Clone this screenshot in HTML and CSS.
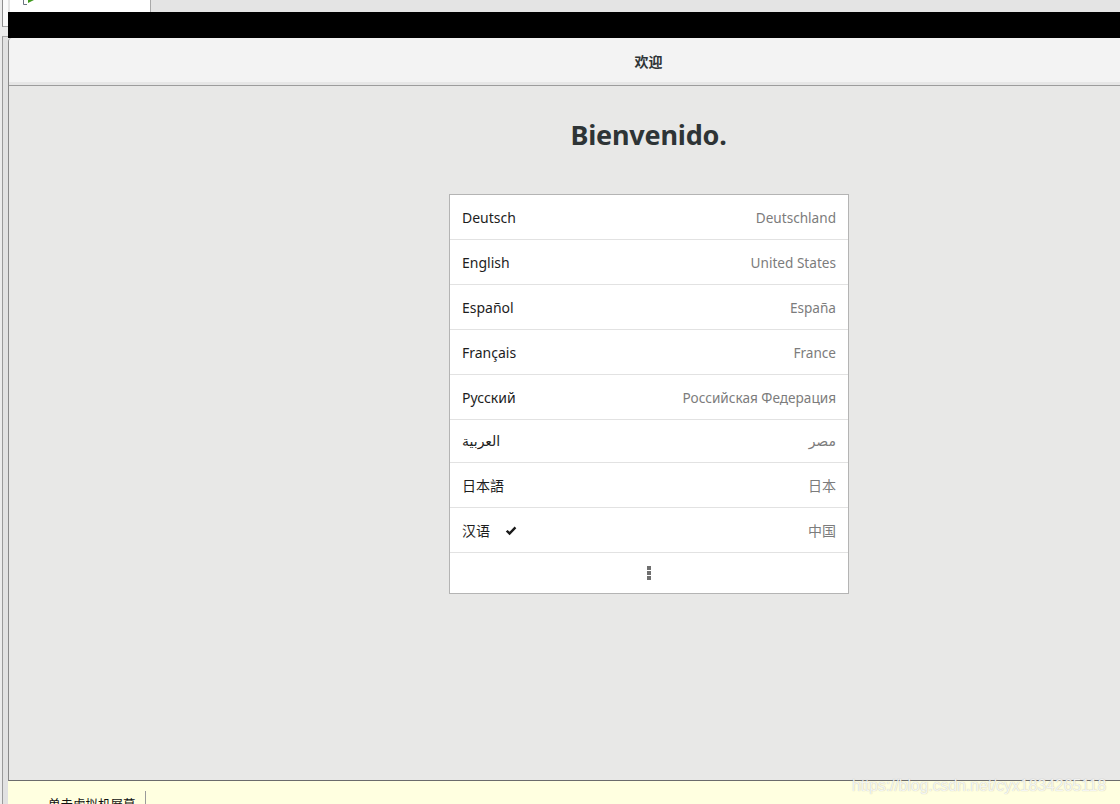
FILE: index.html
```html
<!doctype html>
<html lang="zh-CN">
  <head>
    <meta charset="UTF-8" />
    <meta name="viewport" content="width=device-width, initial-scale=1.0" />
    <title>欢迎</title>
    <link rel="stylesheet" href="styles.css">
  </head>
  <body>
    <div class="side">
      <div class="side-box"></div>
      <div class="side-rest"></div>
    </div>

    <div class="main">
      <div class="tabs">
        <div class="tab">
          <svg class="tab-icon" width="14" height="8" viewBox="0 0 14 8">
            <path d="M1.5 -4 V4.5 H5" fill="none" stroke="#6a7480" stroke-width="1" />
            <path d="M6 -3 L12 0 L6 3 Z" fill="#3f9a1f" />
          </svg>
        </div>
      </div>
      <div class="black-band"></div>

      <div class="window">
        <div class="header">欢迎</div>
        <div class="content">
          <h1 class="welcome">Bienvenido.</h1>
          <div class="lang-list">
            <div class="lang-row"><span class="lang">Deutsch</span><span class="region">Deutschland</span></div>
            <div class="lang-row"><span class="lang">English</span><span class="region">United States</span></div>
            <div class="lang-row"><span class="lang">Español</span><span class="region">España</span></div>
            <div class="lang-row"><span class="lang">Français</span><span class="region">France</span></div>
            <div class="lang-row"><span class="lang">Русский</span><span class="region">Российская Федерация</span></div>
            <div class="lang-row short"><span class="lang arabic">العربية</span><span class="region arabic">مصر</span></div>
            <div class="lang-row"><span class="lang cjk">日本語</span><span class="region cjk">日本</span></div>
            <div class="lang-row">
              <span class="lang cjk">汉语
                <svg class="check" width="12" height="10" viewBox="0 0 12 10">
                  <path d="M0.8 5.6 L2.6 3.9 L4.6 5.8 L9.6 0.6 L11.3 2.2 L4.6 9.2 Z" fill="#1a1a1a" />
                </svg>
              </span>
              <span class="region cjk">中国</span>
            </div>
            <div class="more-row">
              <span class="dot"></span><span class="dot"></span><span class="dot"></span>
            </div>
          </div>
        </div>
      </div>

      <div class="status">
        <span class="status-text">单击虚拟机屏幕</span>
        <span class="status-sep"></span>
        <span class="watermark">https://blog.csdn.net/cyx1834265118</span>
      </div>
    </div>
  </body>
</html>
```

FILE: styles.css
```css
html, body {
  margin: 0;
  padding: 0;
}
body {
  width: 1120px;
  height: 804px;
  overflow: hidden;
  display: flex;
  background: #e4e4e4;
  font-family: "Noto Sans", "Noto Sans CJK SC", sans-serif;
}
.side {
  width: 8px;
  flex: none;
  display: flex;
  flex-direction: column;
  background: #ececec;
}
.side-box {
  height: 26px;
  margin-left: 2px;
  border-left: 1px solid #8e8e8e;
  border-bottom: 1px solid #a8a8a8;
  background: #fafafa;
}
.side-rest {
  flex: 1;
  margin-left: 2px;
  margin-top: 9px;
  border-left: 1px solid #9a9a9a;
  border-top: 1px solid #a8a8a8;
  background: #e2e2e2;
}
.main {
  flex: 1;
  min-width: 0;
  display: flex;
  flex-direction: column;
  overflow: hidden;
}
.tabs {
  height: 12px;
  flex: none;
  display: flex;
  background: #e4e4e4;
}
.tab {
  width: 140px;
  margin-left: 2px;
  background: #ffffff;
  border-right: 1px solid #a9a9a9;
  position: relative;
  overflow: hidden;
}
.tab-icon {
  position: absolute;
  left: 12px;
  top: 0;
}
.black-band {
  height: 26px;
  flex: none;
  background: #000000;
}
.window {
  width: 1280px;
  flex: 1;
  display: flex;
  flex-direction: column;
  background: #e8e8e7;
  border-bottom: 1px solid #6b6b6b;
  border-left: 1px solid #8a8a8a;
  border-top-left-radius: 4px;
  box-sizing: border-box;
  color: #2e3436;
}
.header {
  height: 48px;
  flex: none;
  box-sizing: border-box;
  border-bottom: 1px solid #9c9c9c;
  box-shadow: inset 0 -3px 0 #e6e6e6;
  background: #f3f3f3;
  border-top-left-radius: 4px;
  display: flex;
  align-items: center;
  justify-content: center;
  font-family: "Noto Sans CJK SC", sans-serif;
  font-size: 14px;
  font-weight: bold;
  padding-bottom: 2px;
}
.content {
  flex: 1;
  display: flex;
  flex-direction: column;
  align-items: center;
}
.welcome {
  margin: 30px 0 0;
  height: 38px;
  line-height: 38px;
  font-size: 27px;
  font-weight: bold;
  color: #2e3436;
  letter-spacing: -0.2px;
}
.lang-list {
  margin-top: 40px;
  width: 400px;
  box-sizing: border-box;
  background: #ffffff;
  border: 1px solid #b4b4b4;
  margin-left: 1px;
}
.lang-row {
  height: 45px;
  box-sizing: border-box;
  border-bottom: 1px solid #e2e2e2;
  display: flex;
  align-items: center;
  justify-content: space-between;
  padding: 0 12px;
  font-size: 14px;
}
.lang-row.short {
  height: 43px;
}
.lang {
  color: #1d1d1d;
  display: flex;
  align-items: center;
}
.region {
  color: #7c7c7c;
  font-size: 13.6px;
}
.arabic {
  font-family: "DejaVu Sans", sans-serif;
  font-size: 14px;
  unicode-bidi: isolate;
  direction: rtl;
}
.region.arabic {
  font-size: 14px;
}
.cjk {
  font-family: "Noto Sans CJK SC", sans-serif;
}
.region.cjk {
  font-size: 14px;
}
.check {
  margin-left: 15px;
  margin-top: 2px;
}
.more-row {
  height: 40px;
  display: flex;
  flex-direction: column;
  align-items: center;
  justify-content: center;
  gap: 1px;
}
.dot {
  width: 4px;
  height: 4px;
  background: #6f6f6f;
}
.status {
  height: 23px;
  flex: none;
  position: relative;
  background: #ffffe0;
  display: flex;
  align-items: flex-start;
}
.status-text {
  margin: 16px 0 0 40px;
  font-family: "Noto Sans CJK SC", sans-serif;
  font-size: 12.5px;
  line-height: 14px;
  color: #111111;
}
.status-sep {
  margin: 10px 0 0 9px;
  width: 1px;
  height: 20px;
  background: #9a9a9a;
}
.watermark {
  position: absolute;
  left: 844px;
  top: -4px;
  font-family: "Liberation Sans", Arial, sans-serif;
  font-size: 16px;
  letter-spacing: -0.15px;
  color: rgba(255, 255, 255, 0.85);
  text-shadow: 0 0 1px rgba(90, 90, 90, 0.45);
}
```
